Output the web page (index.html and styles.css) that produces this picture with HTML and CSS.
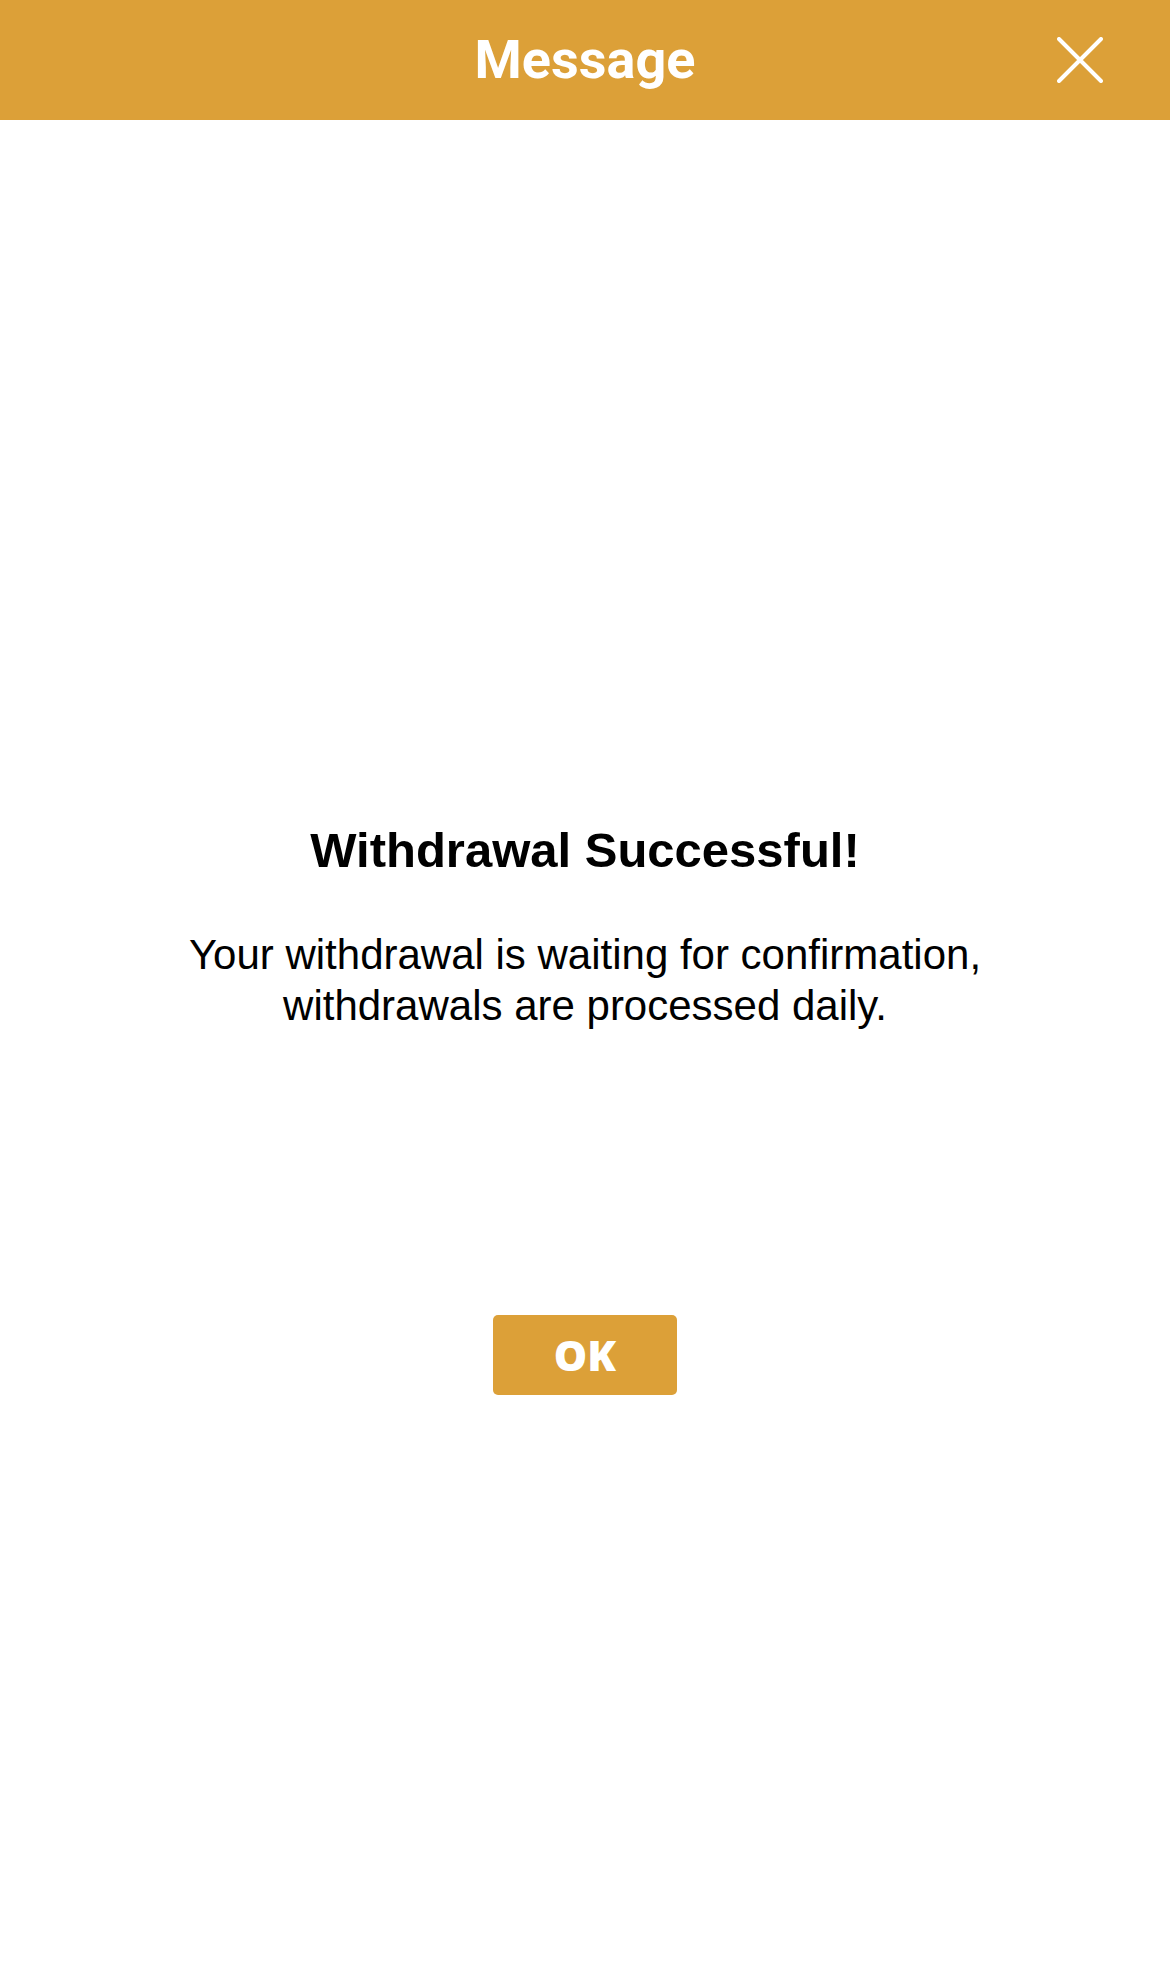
FILE: index.html
```html
<!DOCTYPE html>
<html lang="en">
<head>
    <meta charset="UTF-8">
    <meta name="viewport" content="width=device-width, initial-scale=1.0">
    <title>Message</title>
    <link rel="stylesheet" href="styles.css">
</head>
<body>
    <header class="top-bar">
        <span></span>
        <h1 class="top-bar-title">Message</h1>
        <button class="close-button" aria-label="Close">
            <svg viewBox="0 0 46 46" width="46" height="46">
                <path d="M2 2 L44 44 M44 2 L2 44" stroke="#fff" stroke-width="4" stroke-linecap="round" fill="none"/>
            </svg>
        </button>
    </header>

    <main class="message-body">
        <h2 class="message-title">Withdrawal Successful!</h2>
        <p class="message-text">Your withdrawal is waiting for confirmation,<br>withdrawals are processed daily.</p>
        <button class="ok-button">OK</button>
    </main>
</body>
</html>
```

FILE: styles.css
```css
body {
    margin: 0;
    background-color: #fff;
    font-family: 'Liberation Sans', Arial, sans-serif;
    min-height: 100vh;
}

.top-bar {
    display: grid;
    grid-template-columns: 1fr auto 1fr;
    align-items: center;
    height: 120px;
    background-color: #dca038;
}

.top-bar-title {
    margin: 0;
    font-family: 'Roboto', sans-serif;
    font-weight: 700;
    font-size: 54px;
    line-height: 120px;
    color: #fff;
}

.close-button {
    justify-self: end;
    width: 46px;
    height: 46px;
    margin-right: 67px;
    padding: 0;
    border: none;
    background: none;
    cursor: pointer;
}

.close-button svg {
    display: block;
}

.message-body {
    display: flex;
    flex-direction: column;
    align-items: center;
    padding-top: 702px;
    text-align: center;
}

.message-title {
    margin: 0;
    font-size: 49px;
    line-height: 56px;
    font-weight: 700;
    color: #000;
}

.message-text {
    margin: 51px 0 0;
    font-size: 42px;
    line-height: 51px;
    color: #000;
}

.ok-button {
    margin-top: 284px;
    width: 184px;
    height: 80px;
    padding: 0;
    border: none;
    border-radius: 5px;
    background-color: #dca038;
    color: #fff;
    font-family: 'Open Sans', sans-serif;
    font-weight: 800;
    font-size: 42px;
    line-height: 80px;
    cursor: pointer;
}
```
